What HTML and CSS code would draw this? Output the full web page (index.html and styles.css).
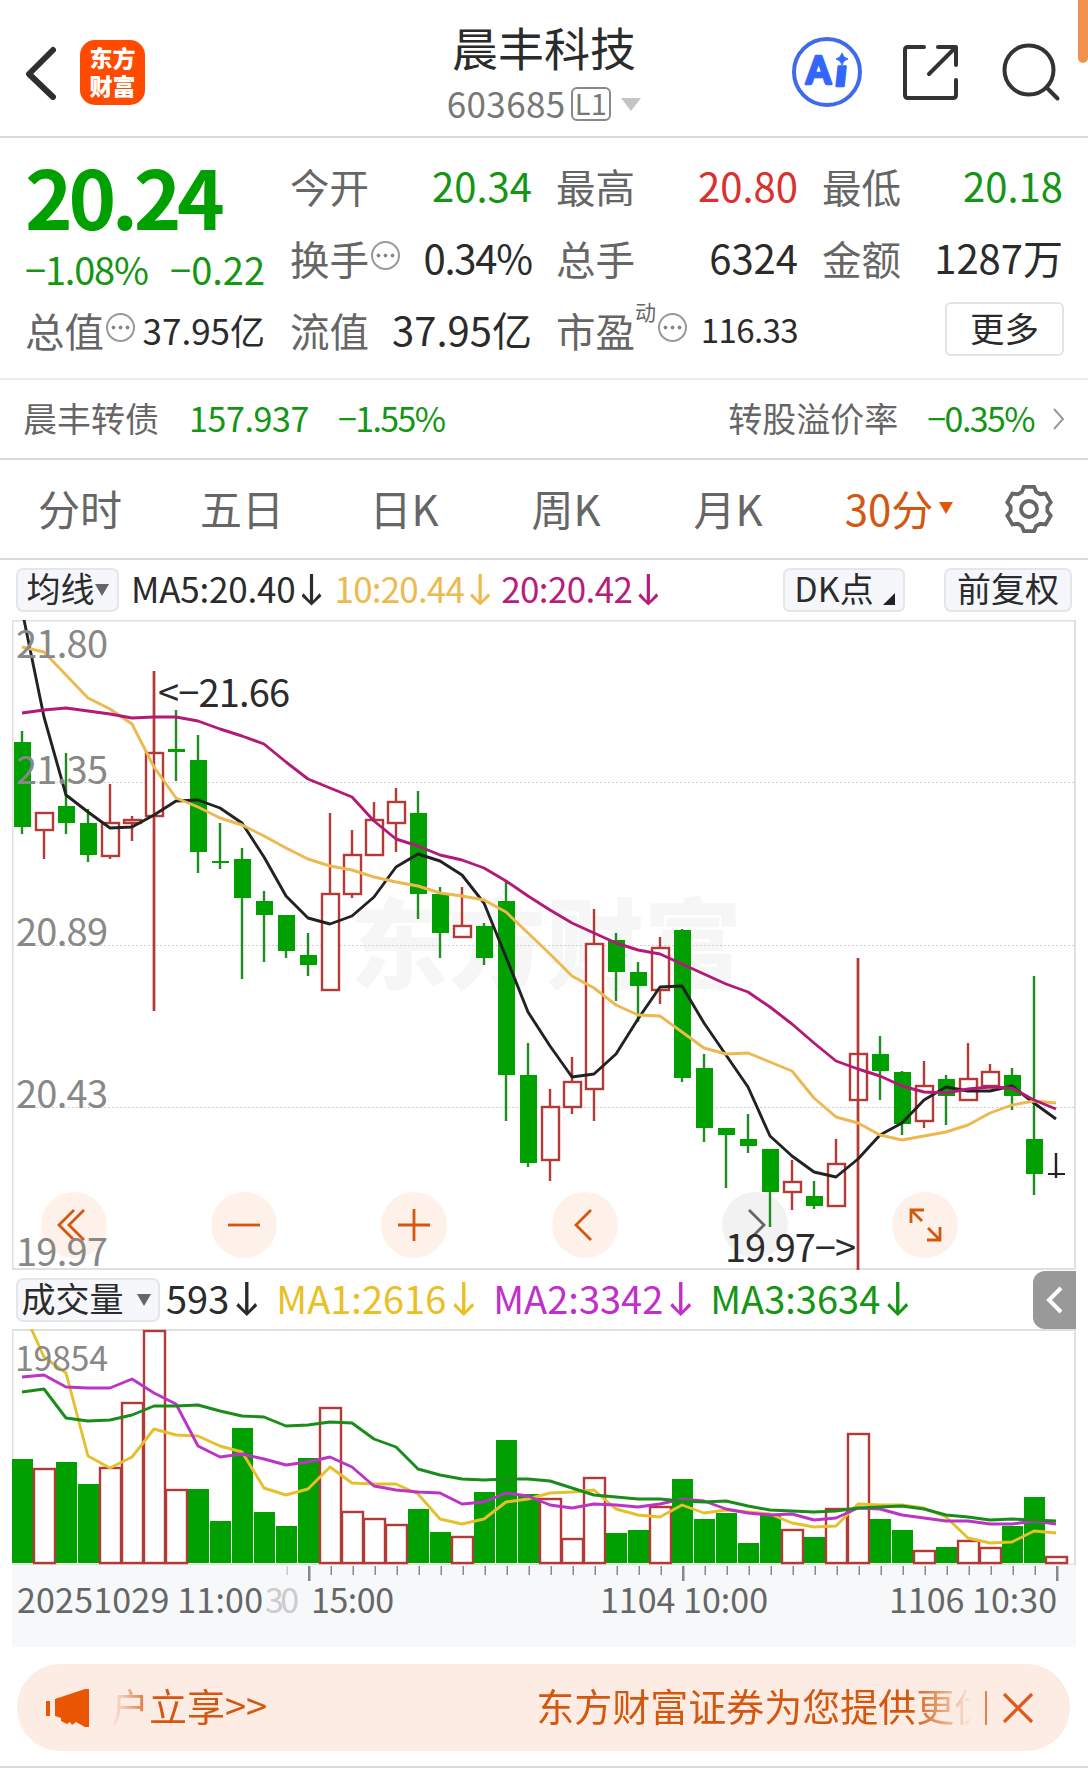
FILE: index.html
```html
<!DOCTYPE html>
<html lang="zh-CN">
<head>
    <meta charset="UTF-8">
    <title>晨丰科技 603685</title>
    <link rel="stylesheet" href="styles.css">
</head>
<body>
    <header class="topbar">
        <div class="topLeft">
            <svg class="backIcon" width="32" height="54" viewBox="0 0 32 54"><path d="M29 4 L5 28 L29 51"/></svg>
            <div class="logo"><span>东方</span><span>财富</span></div>
        </div>
        <div class="titleBox">
            <div class="stockName">晨丰科技</div>
            <div class="stockCode"><span class="code">603685</span><span class="level">L1</span><i class="tri triGrey"></i></div>
        </div>
        <div class="topRight">
            <svg width="72" height="72" viewBox="0 0 72 72">
                <circle cx="36" cy="36" r="33" fill="#fff" stroke="#3f6bea" stroke-width="4"/>
                <text class="ai" x="15" y="48" textLength="25" lengthAdjust="spacingAndGlyphs">A</text>
                <text class="ai" transform="translate(43 50) skewX(-6)" x="0" y="0" textLength="12" lengthAdjust="spacingAndGlyphs">ı</text>
                <path d="M51 17 Q52 22 57 23 Q52 24 51 29 Q50 24 45 23 Q50 22 51 17Z" fill="#3366ff" stroke="#3366ff"/>
            </svg>
            <svg class="line" width="60" height="60" viewBox="0 0 60 60"><path d="M22 5 H6 Q3 5 3 8 V53 Q3 56 6 56 H51 Q54 56 54 53 V38 M36 5 H54 V23 M53 6 L27 32"/></svg>
            <svg class="line" width="60" height="60" viewBox="0 0 60 60"><circle cx="28" cy="28" r="24.5"/><path d="M46 46 L56.500 56.500"/></svg>
        </div>
        <div class="edgeMark"></div>
    </header>

    <section class="quote">
        <div class="priceBox">
            <div class="price">20.24</div>
            <div class="change"><span class="pct">−1.08%</span><span>−0.22</span></div>
            <div class="cell total"><label>总值</label><i class="dots"></i><b>37.95亿</b></div>
        </div>
        <div class="grid">
            <div class="cell"><label>今开</label><b class="green">20.34</b></div>
            <div class="cell"><label>最高</label><b class="red">20.80</b></div>
            <div class="cell"><label>最低</label><b class="green">20.18</b></div>
            <div class="cell"><label>换手</label><i class="dots"></i><b class="pct">0.34%</b></div>
            <div class="cell"><label>总手</label><b>6324</b></div>
            <div class="cell"><label>金额</label><b>1287万</b></div>
            <div class="cell"><label>流值</label><b>37.95亿</b></div>
            <div class="cell pe"><label>市盈</label><sup>动</sup><i class="dots"></i><b class="small">116.33</b></div>
            <div class="cell"><button class="more">更多</button></div>
        </div>
    </section>

    <section class="bond">
        <span class="bondName">晨丰转债</span>
        <span class="green bondPrice">157.937</span>
        <span class="green bondPct">−1.55%</span>
        <span class="bondRight">转股溢价率</span>
        <span class="green bondPct bondRate">−0.35%</span>
        <svg width="14" height="24" viewBox="0 0 14 24"><path d="M2 2 L11 12 L2 22" fill="none" stroke="#999" stroke-width="2"/></svg>
    </section>

    <nav class="tabs">
        <span>分时</span>
        <span>五日</span>
        <span>日K</span>
        <span>周K</span>
        <span>月K</span>
        <span class="active">30分<i class="tri triOrange"></i></span>
        <svg id="gear" width="52" height="52" viewBox="0 0 52 52"></svg>
    </nav>

    <div class="indicators">
        <div class="chip chipMa">均线<i class="tri"></i></div>
        <span class="ma ma5">MA5:20.40<i class="down"></i></span>
        <span class="ma ma10">10:20.44<i class="down"></i></span>
        <span class="ma ma20">20:20.42<i class="down"></i></span>
        <div class="chip chipDk">DK点<i class="corner"></i></div>
        <div class="chip chipFq">前复权</div>
    </div>

    <div class="chart">
        <svg id="kline" width="1064" height="650" viewBox="12 620 1064 650"></svg>
    </div>

    <div class="indicators volume">
        <div class="chip chipVol">成交量<i class="tri"></i></div>
        <span class="ma">593<i class="down"></i></span>
        <span class="ma v1">MA1:2616<i class="down"></i></span>
        <span class="ma v2">MA2:3342<i class="down"></i></span>
        <span class="ma v3">MA3:3634<i class="down"></i></span>
        <div class="drawer"><svg width="20" height="30" viewBox="0 0 20 30"><path d="M16 3 L4 15 L16 27" fill="none" stroke="#fff" stroke-width="4"/></svg></div>
    </div>

    <div class="chart">
        <svg id="vol" width="1064" height="318" viewBox="12 1329 1064 318"></svg>
    </div>

    <div class="banner">
        <svg width="46" height="40" viewBox="0 0 46 40" fill="#ea5504"><path d="M1 13 h4 v15 h-4z M10 11 L40 1 H44 V39 H40 L31 34 L27 37 L25 34 L22 36 L16 33 L16 30 L10 28Z"/></svg>
        <div class="marquee"><span>户立享&gt;&gt;</span><span class="next">东方财富证券为您提供更优</span></div>
        <i class="sep"></i>
        <svg width="32" height="32" viewBox="0 0 32 32"><path d="M2 2 L30 30 M30 2 L2 30" stroke="#e0591a" stroke-width="3.2"/></svg>
    </div>
    <div class="bottomLine"></div>
    <script src="chart.js"></script>
</body>
</html>
```
FILE: styles.css
```css
* {
    box-sizing: border-box;
}

body {
    margin: 0;
    width: 1088px;
    height: 1770px;
    overflow: hidden;
    background: #fff;
    color: #2b2b2b;
    font-family: "Noto Sans CJK SC", sans-serif;
}

svg {
    display: block;
    flex: none;
}

i {
    font-style: normal;
    flex: none;
}

.green { color: #149614; }
.red { color: #d93030; }

.tri {
    border: 7px solid transparent;
    border-top: 12px solid #666;
    border-bottom: 0;
}

/* top bar */
.topbar {
    position: relative;
    height: 138px;
    display: flex;
    justify-content: space-between;
    border-bottom: 2px solid #d9d9d9;
}

.topLeft {
    display: flex;
    align-items: center;
    width: 300px;
    padding: 9px 0 0 24px;
}

.backIcon path {
    fill: none;
    stroke: #2f2f2f;
    stroke-width: 6;
    stroke-linecap: round;
    stroke-linejoin: round;
}

.logo {
    display: flex;
    flex-direction: column;
    justify-content: center;
    align-items: center;
    width: 65px;
    height: 65px;
    margin-left: 24px;
    padding-bottom: 3px;
    border-radius: 15px;
    background: #ff4a00;
    color: #fff;
    font-size: 23px;
    font-weight: 900;
    line-height: 28px;
}

.titleBox {
    display: flex;
    flex-direction: column;
    align-items: center;
    padding-top: 17px;
}

.stockName {
    font-size: 46px;
    line-height: 58px;
}

.stockCode {
    display: flex;
    align-items: center;
    height: 54px;
    color: #777;
    font-size: 35px;
    letter-spacing: 0.4px;
}

.level {
    height: 34px;
    margin: 3px 10px 0 5px;
    padding: 0 2px;
    border: 2px solid #888;
    border-radius: 6px;
    font-size: 29px;
    line-height: 27px;
}

.triGrey {
    margin-top: 4px;
    border-width: 13px 10px 0;
    border-top-color: #c4c4c4;
}

.topRight {
    display: flex;
    align-items: center;
    justify-content: space-between;
    width: 300px;
    padding: 8px 27px 0 3px;
}

.ai {
    fill: #3366ff;
    stroke: #3366ff;
    stroke-width: 2.5;
    stroke-linejoin: round;
    font: 900 38px Lato, sans-serif;
}

.line {
    fill: none;
    stroke: #333;
    stroke-width: 4;
    stroke-linecap: round;
    stroke-linejoin: round;
}

.edgeMark {
    position: absolute;
    right: 0;
    top: 0;
    width: 10px;
    height: 63px;
    border-radius: 0 0 5px 5px;
    background: #f0914f;
}

/* quote */
.quote {
    display: flex;
    height: 242px;
    border-bottom: 2px solid #ebebeb;
}

.priceBox {
    width: 265px;
    padding-left: 25px;
}

.price {
    height: 97px;
    padding-top: 8px;
    color: #00a000;
    font-size: 81px;
    font-weight: 700;
    line-height: 97px;
    letter-spacing: -4.4px;
}

.change {
    display: flex;
    justify-content: space-between;
    height: 58px;
    color: #149614;
    font-size: 38px;
    line-height: 68px;
}

.pct {
    letter-spacing: -1.2px;
}

.grid {
    display: grid;
    grid-template-columns: 242px 242px 241px;
    grid-template-rows: 72px 72px 72px;
    column-gap: 24px;
    margin-left: 25px;
    padding-top: 11px;
}

.cell {
    display: flex;
    align-items: center;
    font-size: 39.5px;
    white-space: nowrap;
}

.cell label {
    color: #666;
}

.cell b {
    margin-left: auto;
    font-weight: 400;
    font-size: 40px;
}

.total {
    height: 72px;
}

.total b {
    font-size: 35px;
}

.cell .small {
    font-size: 33px;
    letter-spacing: -0.6px;
}

.cell sup {
    align-self: flex-start;
    font-size: 21px;
    line-height: 36px;
    color: #666;
}

.dots {
    width: 29px;
    height: 29px;
    margin: -4px 0 0 2px;
    border: 2px solid #999;
    border-radius: 50%;
    background: radial-gradient(circle, #888 1.8px, transparent 2.2px) 50% 50% / 7px 25px no-repeat,
        radial-gradient(circle, #888 1.8px, transparent 2.2px) 2px 50% / 7px 25px no-repeat,
        radial-gradient(circle, #888 1.8px, transparent 2.2px) 16px 50% / 7px 25px no-repeat;
}

.more {
    width: 119px;
    height: 54px;
    margin: 0 -1px 0 auto;
    padding: 0 0 4px;
    border: 2px solid #e3e3e3;
    border-radius: 6px;
    background: #fff;
    color: #2b2b2b;
    font: 34.5px/46px "Noto Sans CJK SC", sans-serif;
}

/* convertible bond */
.bond {
    display: flex;
    align-items: center;
    height: 80px;
    padding: 0 22px 3px 23px;
    border-bottom: 2px solid #d9d9d9;
    color: #666;
    font-size: 34px;
}

.bond .green {
    color: #149614;
}

.bond svg {
    margin-top: 3px;
}

.bondPrice {
    margin: 0 29px 0 30px;
    letter-spacing: -0.4px;
}

.bondPct {
    letter-spacing: -1.6px;
}

.bondRight {
    margin-left: auto;
}

.bondRate {
    margin: 0 18px 0 29px;
}

/* period tabs */
.tabs {
    display: grid;
    grid-template-columns: repeat(5, 162px) 180px 52px;
    align-items: center;
    justify-items: center;
    height: 100px;
    margin-left: -1px;
    border-bottom: 2px solid #d9d9d9;
    color: #666;
    font-size: 42px;
}

.tabs span {
    padding-bottom: 3px;
}

#gear {
    margin-left: 28px;
}

.active {
    display: flex;
    align-items: center;
    color: #d4570f;
}

.triOrange {
    margin: 0 0 0 6px;
    border-top-color: #e0560a;
}

/* indicator rows */
.indicators {
    display: flex;
    align-items: center;
    height: 60px;
    padding: 0 16px;
    font-size: 35px;
    white-space: nowrap;
}

.chip {
    display: flex;
    align-items: center;
    justify-content: center;
    height: 44px;
    padding-bottom: 5px;
    border: 2px solid #e4e7ea;
    border-radius: 7px;
    background: #f5f7fa;
    font-size: 34px;
}

.chip .tri {
    margin-top: 5px;
}

.chipMa {
    width: 103px;
    margin-right: 12px;
}

.ma {
    display: flex;
    align-items: center;
    padding-bottom: 5px;
}

.ma5 {
    margin-right: 13px;
    letter-spacing: -0.2px;
}

.ma10 {
    margin-right: 11px;
    color: #efb94f;
    letter-spacing: -0.8px;
}

.ma20 {
    color: #b81c7c;
    letter-spacing: -0.6px;
}

.chipDk {
    width: 122px;
    margin-left: auto;
}

.chipFq {
    width: 128px;
    margin-left: 39px;
}

.corner {
    align-self: flex-end;
    margin: 0 -1px 0 9px;
    border: 6px solid #222;
    border-top-color: transparent;
    border-left-color: transparent;
}

.down {
    width: 20px;
    height: 32px;
    margin: 4px 0 0 6px;
    background: currentColor;
    clip-path: polygon(42% 0, 58% 0, 58% 84%, 90% 62%, 100% 70%, 50% 100%, 0 70%, 10% 62%, 42% 84%);
}

.volume {
    height: 59px;
    padding-right: 12px;
    font-size: 38px;
}

.volume .down {
    height: 34px;
    width: 21px;
    margin-left: 7px;
}

.chipVol {
    width: 144px;
    margin-right: 6px;
    padding-right: 4px;
    font-size: 34px;
}

.chipVol .tri {
    margin-left: 13px;
}

.v1 { margin-left: 19px; color: #eabf24; }
.v2 { margin-left: 19px; color: #c22ecb; }
.v3 { margin-left: 19px; color: #149614; }

.drawer {
    display: flex;
    align-items: center;
    justify-content: center;
    width: 43px;
    height: 58px;
    margin-left: auto;
    border-radius: 12px 0 0 12px;
    background: #999;
}

.chart {
    padding-left: 12px;
}

.label {
    fill: #888;
    font-size: 38px;
}

.volLabel {
    font-size: 34px;
}

.axis {
    fill: #666;
    font-size: 34px;
}

.faded {
    fill: #ccc;
}

.note {
    fill: #2b2b2b;
    font-size: 38px;
}

.watermark {
    fill: #f6f6f6;
    font-size: 98px;
    font-weight: 900;
}

/* banner */
.banner {
    display: flex;
    align-items: center;
    height: 87px;
    margin: 17px 18px 0 17px;
    padding-left: 28px;
    border-radius: 44px;
    background: #fcece3;
    color: #d4570f;
    font-size: 38px;
}

.marquee {
    display: flex;
    flex: none;
    width: 860px;
    height: 60px;
    margin-left: 20px;
    overflow: hidden;
    white-space: nowrap;
    line-height: 54px;
    -webkit-mask-image: linear-gradient(90deg, transparent, #000 45px, #000 800px, transparent 862px);
    mask-image: linear-gradient(90deg, transparent, #000 45px, #000 800px, transparent 862px);
}

.next {
    margin: 0 -30px 0 269px;
}

.sep {
    width: 2px;
    height: 34px;
    margin: 0 15px 0 14px;
    background: #e0814f;
}

.bottomLine {
    height: 2px;
    margin-top: 15px;
    background: #d9d9d9;
}
```
FILE: chart.js
```js
const STEP = 22;
const GREEN = "#00a000";
const RED = "#b33a36";

// g = down, r = up, k = flat; then high, body top, body bottom, low
const candles = [
    ["g",731,742,827,834],["r",812,812,831,859],["g",753,806,823,834],["g",809,823,855,862],
    ["r",784,822,857,859],["r",816,819,824,841],["r",671,752,817,1011],["g",710,749,752,781],
    ["g",735,760,852,873],["g",823,861,863,869],["g",848,859,898,979],["g",891,901,915,962],
    ["g",915,915,951,958],["g",933,955,965,976],["r",813,893,991,991],["r",830,854,895,898],
    ["r",802,819,856,856],["r",788,801,824,852],["g",791,813,894,919],["g",887,894,933,958],
    ["r",887,925,938,938],["g",923,926,958,965],["g",881,901,1075,1121],["g",1043,1075,1163,1167],
    ["r",1089,1106,1161,1181],["r",1057,1081,1108,1114],["r",909,943,1090,1121],["g",933,940,972,1001],
    ["g",962,972,986,1022],["r",937,947,991,1004],["g",929,930,1078,1082],["g",1054,1068,1128,1142],
    ["g",1128,1128,1135,1188],["g",1114,1139,1146,1153],["g",1149,1149,1192,1227],["r",1160,1181,1193,1210],
    ["g",1181,1196,1206,1209],["r",1139,1163,1207,1207],["r",958,1053,1101,1270],["g",1036,1054,1071,1100],
    ["g",1071,1072,1124,1135],["r",1061,1085,1122,1128],["g",1075,1079,1096,1125],["r",1043,1078,1101,1101],
    ["r",1064,1071,1087,1087],["g",1068,1075,1096,1110],["g",976,1139,1174,1195],["k",1153,1173,1175,1178]
];
const ma5 = [610,717,795,812,828,827,815,801,800,808,823,857,896,918,924,916,897,867,854,861,875,903,957,1012,1046,1077,1074,1054,1019,987,986,1023,1055,1087,1136,1156,1172,1177,1159,1135,1123,1100,1087,1091,1091,1086,1103,1119];
const ma10 = [647,652,675,698,709,724,767,798,807,818,825,836,848,859,866,870,877,882,886,893,896,900,912,933,954,976,988,1005,1015,1016,1032,1048,1054,1053,1062,1071,1098,1117,1123,1135,1140,1136,1132,1125,1113,1105,1101,1103];
const ma20 = [713,710,708,711,714,718,717,717,721,729,736,744,762,779,788,797,821,839,846,855,860,868,881,896,910,923,933,943,950,954,964,974,984,992,1007,1024,1043,1061,1069,1076,1086,1092,1093,1089,1087,1088,1100,1109];

const volTops = [1459,1468,1462,1484,1467,1402,1330,1489,1489,1521,1428,1512,1526,1458,1407,1511,1518,1524,1509,1532,1536,1492,1440,1494,1498,1538,1477,1533,1530,1506,1479,1519,1513,1543,1515,1529,1537,1508,1433,1519,1530,1550,1547,1540,1547,1526,1497,1556];
const volColors = "grggrrrrgggggg" + "rrrrggrgggrrrggrggggg" + "rgrrggrgrrggr";
const vma1 = [1308,1357,1373,1456,1468,1457,1429,1435,1436,1446,1452,1488,1495,1489,1467,1483,1484,1484,1494,1519,1524,1519,1502,1499,1493,1492,1490,1509,1515,1517,1505,1513,1510,1512,1514,1523,1527,1526,1504,1505,1505,1508,1517,1538,1543,1542,1531,1533];
const vma2 = [1377,1375,1387,1388,1388,1379,1393,1404,1446,1457,1454,1459,1465,1462,1457,1467,1486,1490,1492,1493,1504,1502,1493,1496,1505,1508,1504,1505,1507,1504,1499,1501,1509,1513,1515,1514,1520,1518,1508,1509,1515,1518,1521,1521,1524,1524,1521,1524];
const vma3 = [1392,1389,1418,1421,1420,1415,1406,1406,1405,1411,1416,1417,1426,1425,1422,1423,1439,1447,1469,1475,1479,1480,1479,1479,1481,1488,1495,1497,1499,1499,1501,1502,1501,1506,1510,1511,1512,1511,1508,1507,1506,1509,1515,1517,1520,1519,1520,1521];

function cx(i) {
    return STEP * (i + 1);
}

function rect(x, y, w, h, fill) {
    return `<rect x="${x}" y="${y}" width="${w}" height="${h}" fill="${fill}"/>`;
}

function hollow(x, y, w, h) {
    return `<rect x="${x + 1}" y="${y + 1}" width="${w - 2}" height="${Math.max(h - 2, 1)}" fill="#fff" stroke="${RED}" stroke-width="2.4"/>`;
}

function wick(x, y1, y2, color) {
    return rect(x - 1.2, y1, 2.4, y2 - y1, color);
}

function line(data, color) {
    const pts = data.map((y, i) => cx(i) + "," + y).join(" ");
    return `<polyline points="${pts}" fill="none" stroke="${color}" stroke-width="2.9" stroke-linejoin="round"/>`;
}

function text(cls, x, y, len, str) {
    return `<text class="${cls}" x="${x}" y="${y}" textLength="${len}">${str}</text>`;
}

function button(x, color, bg, d) {
    return `<circle cx="${x}" cy="1225" r="33" fill="${bg}"/><path transform="translate(${x} 1225)" d="${d}" fill="none" stroke="${color}" stroke-width="2.8"/>`;
}

function drawKline() {
    let s = text("watermark", 350, 981, 392, "东方财富");
    [782, 945, 1107].forEach(y => {
        s += `<path d="M12 ${y}.5 H1075" stroke="#d0d0d0" stroke-width="1" stroke-dasharray="2 2"/>`;
    });
    s += `<path d="M12.5 620 V1270 M1075 620 V1270 M12 620.5 H1076 M12 1269 H1076" stroke="#e0e0e0" stroke-width="2"/>`;

    s += button(74, "#d4570f", "#fef1ea", "M0 -15 L-15 0 L0 15 M10 -15 L-5 0 L10 15");
    s += button(244, "#d4570f", "#fef1ea", "M-16 0 H16");
    s += button(414, "#d4570f", "#fef1ea", "M-16 0 H16 M0 -16 V16");
    s += button(585, "#d4570f", "#fef1ea", "M6 -15 L-9 0 L6 15");
    s += button(755, "#666", "#f2f2f2", "M-6 -15 L9 0 L-6 15");
    s += button(925, "#d4570f", "#fef1ea", "M-14 -2 V-15 H-1 M-14 -15 L-3 -4 M15 2 V15 H2 M15 15 L3 3");

    candles.forEach(([c, high, top, bottom, low], i) => {
        const x = cx(i);
        const color = c === "g" ? "#1e8c1e" : c === "r" ? RED : "#222";
        if (c === "r") {
            s += hollow(x - 9, top, 19, bottom - top);
            s += wick(x, high, top, color) + wick(x, bottom, low, color);
        } else {
            s += wick(x, high, low, color);
            s += rect(x - 8, top, 17, bottom - top, c === "g" ? GREEN : "#222");
        }
    });
    // the two longest wicks run through their bodies
    s += wick(cx(6), 671, 1011, RED) + wick(cx(38), 958, 1270, RED);
    s += line(ma5, "#222") + line(ma10, "#edb84f") + line(ma20, "#b31a78");
    s += text("label", 16, 658, 92, "21.80") + text("label", 16, 784, 92, "21.35");
    s += text("label", 16, 946, 92, "20.89") + text("label", 16, 1108, 92, "20.43") + text("label", 16, 1266, 92, "19.97");
    s += text("note", 158, 707, 132, "&lt;−21.66") + text("note", 725, 1262, 131, "19.97−&gt;");
    document.getElementById("kline").innerHTML = s;
}

function drawVolume() {
    let s = `<path d="M12.5 1329 V1564 M1075 1329 V1564 M12 1330 H1076 M12 1564.5 H1076" stroke="#e0e0e0" stroke-width="2"/>`;
    s += rect(12, 1565, 1064, 82, "#f7f8fa");
    volTops.forEach((y, i) => {
        const x = cx(i);
        s += volColors[i] === "g" ? rect(x - 10, y, 21, 1563 - y, GREEN) : hollow(x - 11, y, 23, 1564 - y);
    });
    s += line(vma1, "#e6c02c") + line(vma2, "#bc34c6") + line(vma3, "#1a8c1a");
    for (let i = 12; i < 48; i++) {
        const big = i === 13 || i === 30 || i === 47;
        s += rect(cx(i) + (big ? 0 : 0.5), 1566, big ? 2.5 : 1.5, big ? 15 : 9, i === 12 ? "#ccc" : "#888");
    }
    s += text("label volLabel", 15, 1371, 93, "19854");
    s += text("axis faded", 265, 1613, 34, "30");
    s += text("axis", 17, 1613, 246, "20251029 11:00") + text("axis", 311, 1613, 83, "15:00");
    s += text("axis", 600, 1613, 168, "1104 10:00") + text("axis", 889, 1613, 168, "1106 10:30");
    document.getElementById("vol").innerHTML = s;
}

function drawGear() {
    let pts = [];
    for (let k = 0; k < 6; k++) {
        [[-23, 18.5], [-13, 22.7], [13, 22.7], [23, 18.5]].forEach(([a, r]) => {
            const t = (k * 60 + a) * Math.PI / 180;
            pts.push((26 + r * Math.sin(t)).toFixed(1) + "," + (26 - r * Math.cos(t)).toFixed(1));
        });
    }
    document.getElementById("gear").innerHTML =
        `<g fill="none" stroke="#666" stroke-width="3.8"><polygon points="${pts.join(" ")}"/><circle cx="26" cy="26" r="8"/></g>`;
}

drawKline();
drawVolume();
drawGear();
```
